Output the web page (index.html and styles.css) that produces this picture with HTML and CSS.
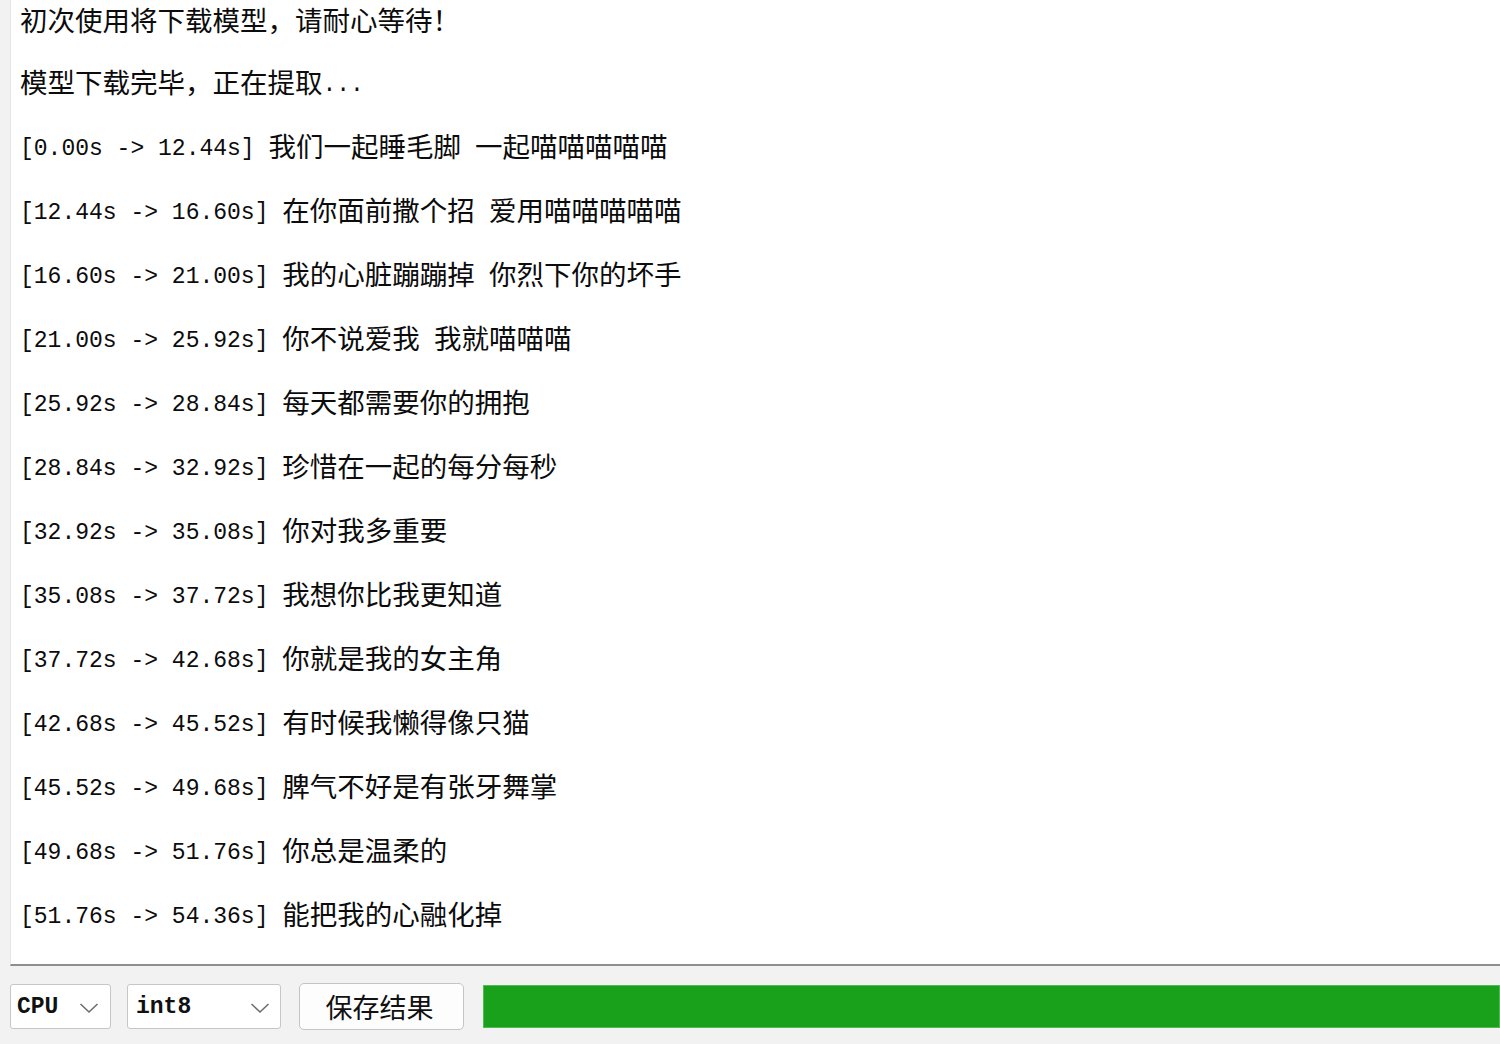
FILE: index.html
```html
<!DOCTYPE html>
<html>
  <head>
    <title>语音识别</title>
    <meta charset="UTF-8">
    <link rel="stylesheet" href="styles.css">
  </head>
  <body>
    <div id="app">
      <div id="output">
        <div id="lines">
          <p>初次使用将下载模型，请耐心等待！</p>
          <p>模型下载完毕，正在提取<span class="ts">...</span></p>
          <p><span class="ts">[0.00s -&gt; 12.44s] </span>我们一起睡毛脚 一起喵喵喵喵喵</p>
          <p><span class="ts">[12.44s -&gt; 16.60s] </span>在你面前撒个招 爱用喵喵喵喵喵</p>
          <p><span class="ts">[16.60s -&gt; 21.00s] </span>我的心脏蹦蹦掉 你烈下你的坏手</p>
          <p><span class="ts">[21.00s -&gt; 25.92s] </span>你不说爱我 我就喵喵喵</p>
          <p><span class="ts">[25.92s -&gt; 28.84s] </span>每天都需要你的拥抱</p>
          <p><span class="ts">[28.84s -&gt; 32.92s] </span>珍惜在一起的每分每秒</p>
          <p><span class="ts">[32.92s -&gt; 35.08s] </span>你对我多重要</p>
          <p><span class="ts">[35.08s -&gt; 37.72s] </span>我想你比我更知道</p>
          <p><span class="ts">[37.72s -&gt; 42.68s] </span>你就是我的女主角</p>
          <p><span class="ts">[42.68s -&gt; 45.52s] </span>有时候我懒得像只猫</p>
          <p><span class="ts">[45.52s -&gt; 49.68s] </span>脾气不好是有张牙舞掌</p>
          <p><span class="ts">[49.68s -&gt; 51.76s] </span>你总是温柔的</p>
          <p><span class="ts">[51.76s -&gt; 54.36s] </span>能把我的心融化掉</p>
        </div>
      </div>
      <div id="toolbar">
        <div class="combo device">
          <span class="value">CPU</span>
          <svg class="chev" width="20" height="12" viewBox="0 0 20 12"><path d="M1.5 2 L10 10 L18.5 2" fill="none" stroke="#6e6e6e" stroke-width="1.6"/></svg>
        </div>
        <div class="combo quant">
          <span class="value">int8</span>
          <svg class="chev" width="20" height="12" viewBox="0 0 20 12"><path d="M1.5 2 L10 10 L18.5 2" fill="none" stroke="#6e6e6e" stroke-width="1.6"/></svg>
        </div>
        <button type="button" class="save">保存结果</button>
        <div class="progress"><div class="fill" style="width: 100%"></div></div>
      </div>
    </div>
  </body>
</html>
```

FILE: styles.css
```css
html, body
{
  margin: 0;
  height: 1044px;
  overflow: hidden;
  background-color: #f2f2f2;
}
#app
{
  display: flex;
  flex-direction: column;
  height: 1044px;
}
#output
{
  margin-left: 10px;
  height: 964px;
  background-color: #ffffff;
  border-left: 1px solid #e4e4e4;
  border-bottom: 2px solid #8e8e8e;
  overflow: hidden;
}
#lines
{
  padding-left: 9px;
  font-family: "Noto Sans CJK SC", sans-serif;
  font-size: 27.5px;
  color: #0c0c0c;
}
#lines p
{
  margin: 0;
  height: 64px;
  line-height: 64px;
  white-space: pre;
  word-spacing: 8px;
}
#lines p:first-child
{
  height: 49px;
  line-height: 38px;
}
.ts
{
  font-family: "Liberation Mono", "Noto Sans CJK SC", monospace;
  font-size: 23px;
  word-spacing: 0;
  vertical-align: 2px;
}
#toolbar
{
  display: flex;
  align-items: center;
  padding: 17px 0 0 10px;
}
.combo
{
  box-sizing: border-box;
  height: 45px;
  display: flex;
  align-items: center;
  justify-content: space-between;
  background-color: #ffffff;
  border: 1px solid #c6c6c6;
  border-radius: 3px;
  font-family: "Liberation Mono", monospace;
  font-weight: bold;
  font-size: 23px;
  color: #111111;
}
.device
{
  width: 101px;
  padding: 0 11px 0 6px;
}
.quant
{
  width: 154px;
  margin-left: 16px;
  padding: 0 10px 0 8px;
}
.chev { margin-top: 2px; }
.save
{
  box-sizing: border-box;
  width: 165px;
  height: 47px;
  margin-left: 18px;
  background-color: #fdfdfd;
  border: 1px solid #c4c4c4;
  border-radius: 5px;
  font-family: "Noto Sans CJK SC", sans-serif;
  font-size: 27px;
  color: #111111;
  padding: 0 4px 0 0;
}
.progress
{
  flex: 1;
  box-sizing: border-box;
  height: 43px;
  margin-left: 19px;
  border: 1px solid #54b854;
  background-color: #e6e6e6;
}
.fill
{
  height: 100%;
  background-color: #19a11c;
}
```
